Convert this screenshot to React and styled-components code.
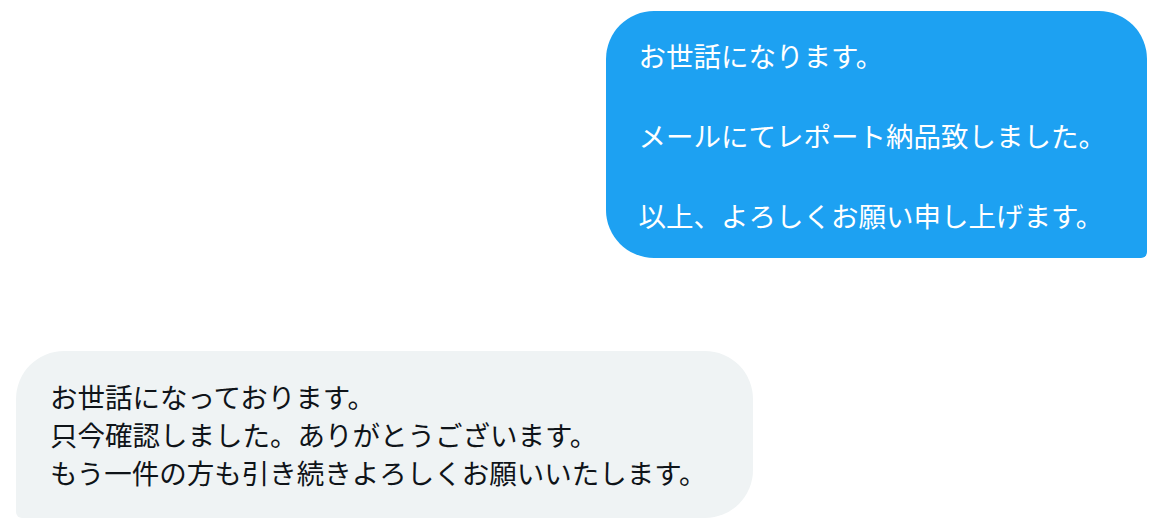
import styled, { createGlobalStyle } from 'styled-components';

const GlobalStyle = createGlobalStyle`
  body {
    margin: 0;
    background: #ffffff;
    font-family: "Noto Sans CJK JP", "Noto Sans", sans-serif;
  }
`;

const Thread = styled.div`
  display: flex;
  flex-direction: column;
  padding: 11px 7px 0 16px;
  gap: 93px;
`;

const Bubble = styled.div`
  align-self: ${(props) => (props.mine ? 'flex-end' : 'flex-start')};
  background-color: ${(props) => (props.mine ? '#1da1f2' : '#eff3f4')};
  color: ${(props) => (props.mine ? '#ffffff' : '#0f1419')};
  border-radius: ${(props) => (props.mine ? '48px 48px 6px 48px' : '48px 48px 48px 6px')};
  font-size: 27.5px;
  line-height: ${(props) => (props.mine ? '40px' : '38px')};
  white-space: pre-line;
  padding: ${(props) => (props.mine ? '24px 41px 23px 33px' : '26px 47px 27px 34px')};
`;

const messages = [
  {
    id: 1,
    mine: true,
    text: 'お世話になります。\n\nメールにてレポート納品致しました。\n\n以上、よろしくお願い申し上げます。',
  },
  {
    id: 2,
    mine: false,
    text: 'お世話になっております。\n只今確認しました。ありがとうございます。\nもう一件の方も引き続きよろしくお願いいたします。',
  },
];

const App = () => (
  <>
    <GlobalStyle />
    <Thread>
      {messages.map((m) => (
        <Bubble key={m.id} mine={m.mine}>
          {m.text}
        </Bubble>
      ))}
    </Thread>
  </>
);

export default App;
